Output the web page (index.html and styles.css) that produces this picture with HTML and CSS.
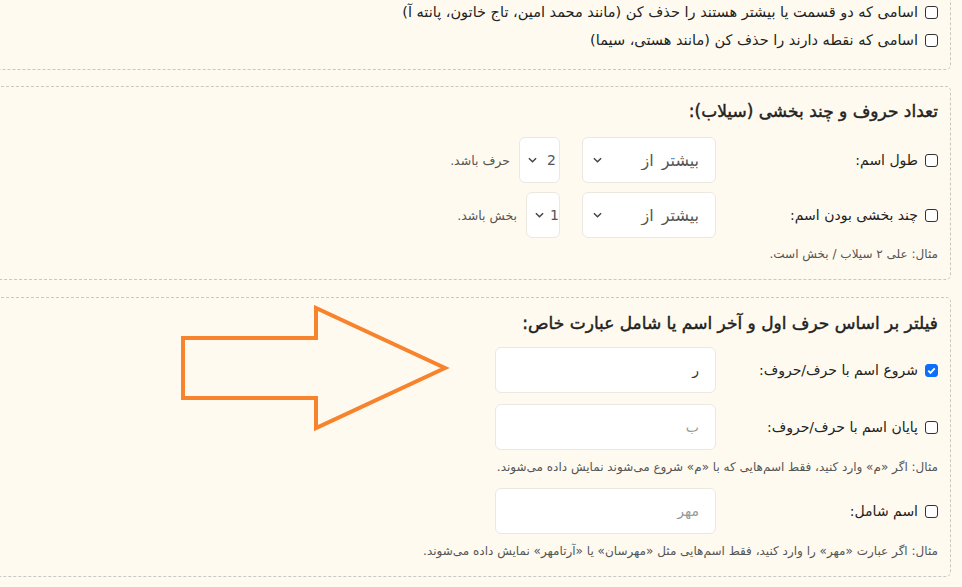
FILE: index.html
```html
<!DOCTYPE html>
<html lang="fa" dir="rtl">
<head>
    <meta charset="UTF-8">
    <meta name="viewport" content="width=device-width, initial-scale=1.0">
    <title>فیلتر اسامی</title>
    <link rel="stylesheet" href="styles.css">
</head>
<body>

<div class="page">
    <!-- Remove section (top cut off) -->
    <div class="box box-first">
        <label class="check-row">
            <input type="checkbox">
            <span>اسامی که دو قسمت یا بیشتر هستند را حذف کن (مانند محمد امین، تاج خاتون، پانته آ)</span>
        </label>
        <label class="check-row">
            <input type="checkbox">
            <span>اسامی که نقطه دارند را حذف کن (مانند هستی، سیما)</span>
        </label>
    </div>

    <!-- Length / syllable section -->
    <div class="box box-length">
        <h3>تعداد حروف و چند بخشی (سیلاب):</h3>
        <div class="field-row">
            <label class="field-label"><input type="checkbox"><span>طول اسم:</span></label>
            <select class="select-wide"><option>بیشتر از</option></select>
            <select class="select-num"><option>2</option></select>
            <span class="suffix">حرف باشد.</span>
        </div>
        <div class="field-row">
            <label class="field-label"><input type="checkbox"><span>چند بخشی بودن اسم:</span></label>
            <select class="select-wide"><option>بیشتر از</option></select>
            <select class="select-num small"><option>1</option></select>
            <span class="suffix">بخش باشد.</span>
        </div>
        <p class="hint">مثال: علی ۲ سیلاب / بخش است.</p>
    </div>

    <!-- Letters section -->
    <div class="box box-letters">
        <h3>فیلتر بر اساس حرف اول و آخر اسم یا شامل عبارت خاص:</h3>
        <div class="field-row">
            <label class="field-label"><input type="checkbox" checked><span>شروع اسم با حرف/حروف:</span></label>
            <input type="text" class="text-input" value="ر">
        </div>
        <div class="field-row">
            <label class="field-label"><input type="checkbox"><span>پایان اسم با حرف/حروف:</span></label>
            <input type="text" class="text-input" placeholder="ب">
        </div>
        <p class="hint">مثال: اگر «م» وارد کنید، فقط اسم‌هایی که با «م» شروع می‌شوند نمایش داده می‌شوند.</p>
        <div class="field-row">
            <label class="field-label"><input type="checkbox"><span>اسم شامل:</span></label>
            <input type="text" class="text-input" placeholder="مهر">
        </div>
        <p class="hint">مثال: اگر عبارت «مهر» را وارد کنید، فقط اسم‌هایی مثل «مهرسان» یا «آرتامهر» نمایش داده می‌شوند.</p>

        <!-- pointer arrow drawn over the form -->
        <svg class="arrow" width="280" height="130" viewBox="0 0 280 130">
            <polygon points="3,33 136,33 136,3 265,63 136,123 136,93 3,93" fill="none" stroke="#f7832d" stroke-width="4" stroke-linejoin="miter"/>
        </svg>
    </div>
</div>

</body>
</html>
```

FILE: styles.css
```css
* {
    margin: 0;
    padding: 0;
    box-sizing: border-box;
}
body {
    font-family: 'DejaVu Sans', sans-serif;
    background-color: #fffaef;
    color: #222;
    font-size: 14px;
    overflow: hidden;
}
.page {
    width: 1000px;
    margin-right: 11px;
    margin-top: -21px;
}
.box {
    border: 1px dashed #c9c7c2;
    border-radius: 5px;
    padding: 13px 12px 14px 12px;
    margin-bottom: 17px;
    position: relative;
}
.box-first {
    padding-top: 18px;
    padding-bottom: 15px;
    margin-bottom: 16px;
}
.box h3 {
    font-size: 17px;
    font-weight: normal;
    -webkit-text-stroke: 0.45px #222;
    margin-bottom: 15px;
    line-height: 22px;
}
.box-letters {
    padding-top: 14px;
}
.box-letters h3 {
    margin-bottom: 13px;
}
.check-row {
    display: flex;
    align-items: center;
    gap: 7px;
    height: 28px;
    font-size: 14.5px;
}
input[type="checkbox"] {
    appearance: none;
    width: 13px;
    height: 13px;
    border: 1.5px solid #333;
    border-radius: 3px;
    background-color: #fff;
    flex-shrink: 0;
}
input[type="checkbox"]:checked {
    background-color: #0d6efd;
    border-color: #0d6efd;
    background-image: url("data:image/svg+xml,%3Csvg xmlns='http://www.w3.org/2000/svg' viewBox='0 0 12 12'%3E%3Cpath d='M2.5 6.2l2.4 2.4 4.6-5' fill='none' stroke='%23fff' stroke-width='2'/%3E%3C/svg%3E");
    background-size: 11px 11px;
    background-position: center;
    background-repeat: no-repeat;
}
.field-row {
    display: flex;
    align-items: center;
    margin-bottom: 9px;
}
.box-letters .field-row {
    margin-bottom: 11px;
}
.field-label {
    display: flex;
    align-items: center;
    gap: 7px;
    width: 222px;
    flex-shrink: 0;
}
select {
    appearance: none;
    font-family: inherit;
    font-size: 14px;
    color: #555;
    height: 46px;
    background-color: #fff;
    border: 1px solid #ebe8e1;
    border-radius: 6px;
    padding-right: 14px;
    background-image: url("data:image/svg+xml,%3Csvg xmlns='http://www.w3.org/2000/svg' viewBox='0 0 10 6'%3E%3Cpath d='M1 1l4 4 4-4' fill='none' stroke='%23444' stroke-width='1.6'/%3E%3C/svg%3E");
    background-size: 9px 6px;
    background-repeat: no-repeat;
    background-position: left 8px center;
}
.select-wide {
    width: 134px;
    padding-right: 16px;
    font-size: 16px;
    word-spacing: 3px;
    background-position: left 10px center;
}
.select-num {
    width: 41px;
    margin-right: 22px;
    padding-right: 0;
    direction: ltr;
    padding-left: 27px;
}
.select-num.small {
    width: 34px;
    padding-left: 23px;
}
.suffix {
    margin-right: 9px;
    color: #555;
    font-size: 12.5px;
}
.text-input {
    width: 221px;
    height: 46px;
    border: 1px solid #ebe8e1;
    border-radius: 6px;
    background-color: #fff;
    font-family: inherit;
    font-size: 14px;
    padding: 0 16px;
    color: #333;
    outline: none;
}
.text-input::placeholder {
    color: #999;
}
.hint {
    font-size: 12px;
    color: #555;
    margin-top: 1px;
    margin-bottom: 14px;
    line-height: 14px;
}
.box-letters .hint {
    margin-top: -1px;
}
.box > .hint:last-of-type {
    margin-bottom: 4px;
}
.box-letters .hint:last-of-type {
    margin-bottom: 4px;
}
.arrow {
    position: absolute;
    left: 228px;
    top: 7px;
}
```
